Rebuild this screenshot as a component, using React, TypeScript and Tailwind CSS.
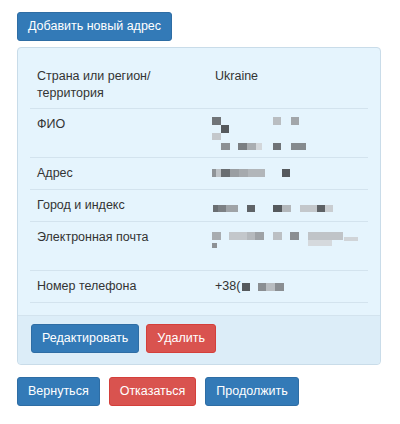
import React from "react";

type Blk = [number, number, number, number, string];

const fioBlocks: Blk[] = [
  [0, 1, 9, 8, "#707478"],
  [61, 1, 8, 8, "#b9bdc1"],
  [79, 1, 8, 8, "#a2a6aa"],
  [9, 9, 8, 8, "#55595d"],
  [0, 17, 9, 7, "#c4c8cc"],
  [9, 27, 9, 7, "#8c9094"],
  [26, 27, 9, 7, "#7a7e82"],
  [35, 27, 9, 7, "#a9adb1"],
  [44, 27, 6, 7, "#d3d7db"],
  [61, 27, 8, 7, "#6f7377"],
  [79, 27, 15, 7, "#858a8e"],
];

const addrBlocks: Blk[] = [
  [0, 4, 4, 8, "#8f9397"],
  [4, 4, 5, 8, "#bfc3c7"],
  [9, 4, 9, 8, "#6a6e72"],
  [18, 4, 9, 8, "#9a9ea2"],
  [27, 4, 9, 8, "#a6aaae"],
  [36, 4, 17, 8, "#b2b6ba"],
  [70, 4, 8, 8, "#55595d"],
];

const cityBlocks: Blk[] = [
  [1, 8, 5, 7, "#6a6e72"],
  [6, 8, 8, 7, "#7c8084"],
  [14, 8, 12, 7, "#9fa3a7"],
  [35, 8, 8, 7, "#5f6367"],
  [61, 8, 9, 7, "#55595d"],
  [70, 8, 9, 7, "#b3b7bb"],
  [88, 8, 17, 7, "#c3c7cb"],
  [105, 8, 8, 7, "#5d6165"],
  [113, 8, 8, 7, "#c9cdd1"],
];

const mailBlocks: Blk[] = [
  [0, 3, 9, 8, "#a8acb0"],
  [17, 3, 18, 8, "#c3c7cb"],
  [35, 3, 8, 8, "#b5b9bd"],
  [43, 3, 9, 8, "#9ea2a6"],
  [61, 3, 9, 8, "#bcc0c4"],
  [78, 3, 9, 8, "#8a8e92"],
  [96, 3, 35, 8, "#c0c4c8"],
  [96, 11, 24, 6, "#d5d9dd"],
  [132, 8, 14, 4, "#d0d4d8"],
  [0, 14, 5, 5, "#8d9195"],
];

const phoneBlocks: Blk[] = [
  [0, 0, 8, 8, "#55595d"],
  [16, 0, 8, 8, "#8a8e92"],
  [24, 0, 9, 8, "#b8bcc0"],
  [33, 0, 9, 8, "#8a8e92"],
];

function Redacted({ blocks, h }: { blocks: Blk[]; h: number }) {
  return (
    <svg width="150" height={h} className="block -ml-[3px]">
      {blocks.map(([x, y, w, hh, c], i) => (
        <rect key={i} x={x} y={y} width={w} height={hh} fill={c} />
      ))}
    </svg>
  );
}

function Row({
  label,
  children,
  pad = "py-[7px]",
}: {
  label: React.ReactNode;
  children: React.ReactNode;
  pad?: string;
}) {
  return (
    <div className="flex border-b border-[#d3e3ee]">
      <div className={`w-[178px] shrink-0 px-[7px] ${pad} leading-[17px]`}>{label}</div>
      <div className={`flex-1 px-[7px] ${pad} leading-[17px]`}>{children}</div>
    </div>
  );
}

const btn =
  "rounded-[3px] border px-[10px] py-[5px] text-[12.5px] leading-[17px] text-white";
const blue = "bg-[#337ab7] border-[#2e6da4]";
const red = "bg-[#d9534f] border-[#d43f3a]";

export default function App() {
  return (
    <div
      className="w-[400px] h-[424px] bg-white px-[17px] pt-[12px] text-[#333] text-[12.5px]"
      style={{ fontFamily: '"Liberation Sans", Arial, sans-serif' }}
    >
      <button className={`${btn} ${blue}`}>Добавить новый адрес</button>

      <div className="mt-[6px] w-[364px] rounded-[4px] border border-[#c9dce9] bg-[#e5f4fd]">
        <div className="p-[12px]">
          <Row label={<>Страна или регион/<br />территория</>} pad="pt-[8px] pb-[6px]">
            Ukraine
          </Row>
          <Row label="ФИО">
            <Redacted blocks={fioBlocks} h={34} />
          </Row>
          <Row label="Адрес">
            <Redacted blocks={addrBlocks} h={17} />
          </Row>
          <Row label="Город и индекс">
            <Redacted blocks={cityBlocks} h={17} />
          </Row>
          <Row label="Электронная почта">
            <div className="h-[34px]">
              <Redacted blocks={mailBlocks} h={20} />
            </div>
          </Row>
          <Row label="Номер телефона">
            <div className="flex items-center">
              <span>+38</span>
              <span className="mr-[2px]">(</span>
              <svg width="50" height="8" className="block">
                {phoneBlocks.map(([x, y, w, hh, c], i) => (
                  <rect key={i} x={x} y={y} width={w} height={hh} fill={c} />
                ))}
              </svg>
            </div>
          </Row>
        </div>
        <div className="flex gap-[7px] border-t border-[#d3e3ee] bg-[#dcedf8] px-[13px] pt-[8px] pb-[11px] rounded-b-[4px]">
          <button className={`${btn} ${blue}`}>Редактировать</button>
          <button className={`${btn} ${red}`}>Удалить</button>
        </div>
      </div>

      <div className="mt-[12px] flex gap-[9px]">
        <button className={`${btn} ${blue}`}>Вернуться</button>
        <button className={`${btn} ${red}`}>Отказаться</button>
        <button className={`${btn} ${blue}`}>Продолжить</button>
      </div>
    </div>
  );
}
